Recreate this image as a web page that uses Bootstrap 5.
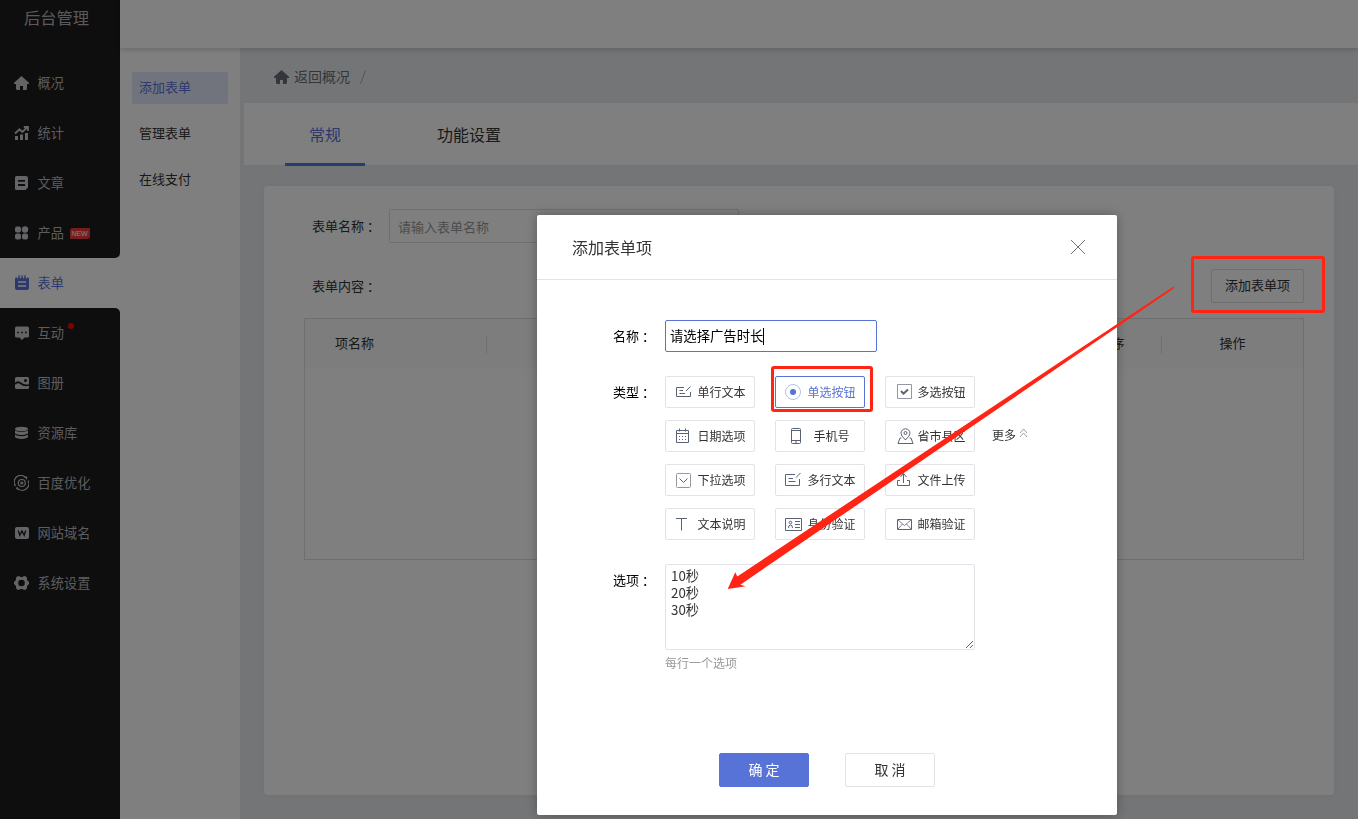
<!DOCTYPE html>
<html lang="zh-CN">
<head>
<meta charset="utf-8">
<meta name="viewport" content="width=device-width, initial-scale=1">
<title>后台管理</title>
<link href="https://cdn.jsdelivr.net/npm/bootstrap@5.3.0/dist/css/bootstrap.min.css" rel="stylesheet">
<style>
  body{font-family:"Noto Sans CJK SC",sans-serif;font-size:13px;line-height:20px;color:#333;background:#e9ebef;height:819px;overflow:hidden;position:relative;font-weight:400}
  svg{flex:none;display:block}
  .colon{padding-left:3px}
  .side{width:120px;background:#fff}
  .side-top{background:#1c1c1c;border-bottom-right-radius:5px;height:258px}
  .side-bottom{background:#1c1c1c;border-top-right-radius:5px}
  .brand-name{height:58px;padding:6px 0 0 24px;font-size:16.3px;line-height:22px;color:#b4b4b9}
  .side .nav-link{height:50px;padding:0 0 1px 14px;color:#b9b9be;gap:8.6px;font-size:13.2px;line-height:18px}
  .side .nav-link svg{margin-top:1px}
  .side .nav svg{color:#c8c8ce}
  .side .nav-link.active{color:#5873d8}
  .new-tag{width:20px;height:11px;background:#ef3b3b;color:#fff;border-radius:3px 1px 3px 1px;font:7px/11px "Liberation Sans",sans-serif;text-align:center;margin:1px 0 0 -3px}
  .dot{width:6px;height:6px;background:#f00;border-radius:50%;margin:-14px 0 0 -5px}
  .topbar{height:48px;background:#fff;box-shadow:0 1px 6px rgba(0,0,0,.22);z-index:1}
  .submenu{width:120px;background:#fff;padding:24px 12px;gap:14px}
  .submenu a{height:32px;padding:0 7px;line-height:30px;color:#333;text-decoration:none;border-radius:2px}
  .submenu a.active{background:#e3e8fb;color:#5873d8}
  .crumbs{height:55px;padding:2px 0 0 34px;font-size:14px;line-height:18px;gap:5px;color:#666f77}
  .crumbs>span{margin-top:-2px}
  .tabbar{height:62px;margin-left:4px;background:#fff;padding-left:41px}
  .tabbar a{width:80px;height:63px;line-height:62px;font-size:16px;color:#333;text-align:center;text-decoration:none;margin-right:64px;white-space:nowrap}
  .tabbar a.active{color:#5873d8;border-bottom:3px solid #5078dc}
  .panel{margin:21px 24px 0 24px;height:609px;background:#fff;border-radius:4px;padding:23px 30px 0 40px;box-shadow:0 0 8px rgba(0,0,0,.05)}
  .panel .flabel{width:85px;padding:0 0 1px 8px}
  .panel .form-control{width:350px;height:34px;font-size:13px;border:1px solid #dcdee3;border-radius:2px;padding:0 8px}
  .form-control::placeholder{color:#999;opacity:1}
  .add-btn{width:93px;height:34px;border:1px solid #dcdee3;border-radius:2px;font-size:13px;padding:0 0 2px;color:#333}
  .grid-table{border:1px solid #dcdee3;height:242px;margin-top:15px}
  .grid-head{height:50px;background:#fafafa;padding-top:1px}
  .grid-head>div{height:18px;line-height:14px;border-right:1px solid #dcdee3;padding-left:30px}
  .modal{background:rgba(0,0,0,.5);overflow:hidden}
  .modal-dialog{width:580px;max-width:none;margin:215px 0 0 537px}
  .modal-content{height:600px;border:0;border-radius:2px;box-shadow:0 0 12px rgba(0,0,0,.3)}
  .modal-header{height:65px;padding:0 32px 0 35px;border-bottom:1px solid #e2e3e5;border-radius:0}
  .modal-title{font-size:16px;line-height:24px;font-weight:400;color:#333}
  .modal-body{padding:40px 0 0 76px;color:#000}
  .lab{width:52px;line-height:31px;flex:none}
  .name-box{width:212px;height:32px;border:1px solid #5873d8;border-radius:2px;padding:0 4px;font-size:13.33px;color:#000}
  .caret{width:1px;height:17px;background:#000}
  .types{display:grid;grid-template-columns:repeat(3,90px);gap:12px 20px}
  .types .btn{height:32px;border:1px solid #e2e2e8;border-radius:2px;padding:0 0 0 8px;font-size:12px;gap:2.6px;color:#333;background:#fff}
  .types .btn span{width:50px;text-align:center;white-space:nowrap}
  .types .btn.active{border-color:#5873d8;color:#5873d8;background:#fff}
  .types svg{width:20px;height:20px;fill:none;stroke:#5a6373}
  textarea.form-control{width:310px;height:86px;min-height:0;border:1px solid #e2e2e8;border-radius:2px;padding:2px 5px;font-size:13.3px;line-height:17px;color:#333}
  .hint{font-size:12px;line-height:18px;color:#999;padding-top:4px}
  .acts{margin:81px 0 0 106px;gap:36px}
  .acts .btn{width:90px;height:34px;border-radius:2px;padding:0 0 1px;font-size:14px;border:1px solid #e2e2e8;color:#333}
  .acts .btn-primary{background:#5873d8;border-color:#5873d8;color:#fff}
  .notes{position:absolute;left:0;top:0;z-index:2000;pointer-events:none}
</style>
</head>
<body class="d-flex">
<aside class="side d-flex flex-column flex-shrink-0">
  <div class="side-top">
    <div class="brand-name">后台管理</div>
    <nav class="nav flex-column">
      <a class="nav-link d-flex align-items-center" href="#"><svg width="15" height="16" viewBox="0 0 15 16" fill="currentColor"><path d="M7.500 1 0 7.800V9h2v4.500Q2 15 3.500 15H6v-4h3v4h2.500q1.500 0 1.500-1.500V9h2V7.800z"/></svg>概况</a>
      <a class="nav-link d-flex align-items-center" href="#"><svg width="15" height="16" viewBox="0 0 15 16" fill="currentColor"><path d="M1 11h3v4H1zM6 9.500h3V15H6zM11 8h3v7h-3z"/><path d="M1 8.500 5.500 4.300 8.300 7 13 2.500M9.800 2H14v4" fill="none" stroke="currentColor" stroke-width="1.800"/></svg>统计</a>
      <a class="nav-link d-flex align-items-center" href="#"><svg width="15" height="16" viewBox="0 0 15 16"><path d="M2.500 1H12q2 0 2 2v9.500L11.500 15h-9Q1 15 1 13.500v-11Q1 1 2.500 1z" fill="currentColor"/><path d="M4 5.800h7M4 10h7" stroke="#1c1c1c" stroke-width="1.800"/></svg>文章</a>
      <a class="nav-link d-flex align-items-center" href="#"><svg width="15" height="16" viewBox="0 0 15 16" fill="currentColor"><rect x="1" y="1.500" width="6" height="6" rx="2"/><circle cx="11" cy="4.500" r="3.200"/><rect x="1" y="8.500" width="6" height="6" rx="2"/><rect x="8" y="8.500" width="6" height="6" rx="2"/></svg>产品<span class="new-tag">NEW</span></a>
    </nav>
  </div>
  <a class="nav-link active d-flex align-items-center flex-shrink-0" href="#"><svg width="15" height="16" viewBox="0 0 15 16"><path d="M1 3.500q0-1 1-1h12q1 0 1 1V13q0 2-2 2H3q-2 0-2-2z" fill="currentColor"/><path d="M5 .2v3M8 .2v3M11 .2v3" stroke="currentColor" stroke-width="1.300"/><path d="M3.300 2.700h.9M6.200 2.700h.7M9.200 2.700h.7M12 2.700h.9M4 7h8M4 11h8" stroke="#fff" stroke-width="1.600"/></svg>表单</a>
  <div class="side-bottom flex-grow-1">
    <nav class="nav flex-column">
      <a class="nav-link d-flex align-items-center" href="#"><svg width="15" height="16" viewBox="0 0 15 16"><path d="M2.500 1.500h11Q15 1.500 15 3v8q0 1.500-1.500 1.500h-3L8 15l-2.500-2.500h-3Q1 12.500 1 11V3q0-1.500 1.500-1.500z" fill="currentColor"/><path d="M3.300 7.500h1.700M7.200 7.500h1.700M11 7.500h1.700" stroke="#1c1c1c" stroke-width="1.600"/></svg>互动<span class="dot"></span></a>
      <a class="nav-link d-flex align-items-center" href="#"><svg width="15" height="16" viewBox="0 0 15 16"><rect x="1" y="2" width="14" height="12" rx="1.500" fill="currentColor"/><circle cx="11.500" cy="5.500" r="1.500" fill="#1c1c1c"/><path d="M1 9Q4 5.800 7 8.500t8 1.500" fill="none" stroke="#1c1c1c" stroke-width="1.700"/></svg>图册</a>
      <a class="nav-link d-flex align-items-center" href="#"><svg width="15" height="16" viewBox="0 0 15 16" fill="currentColor"><ellipse cx="7.500" cy="4" rx="6.500" ry="2.300"/><path d="M1 5.600q6.500 3 13 0v2.800q-6.500 3-13 0zM1 9.800q6.500 3 13 0v2.500q-2.500 1.800-6.500 1.800T1 12.300z"/></svg>资源库</a>
      <a class="nav-link d-flex align-items-center" href="#"><svg width="15" height="16" viewBox="0 0 15 16" fill="none" stroke="currentColor" stroke-width="1.200"><path d="M1.500 11A6.600 6.600 0 0 1 12 3M14 5.500A6.600 6.600 0 0 1 3.500 13.300"/><circle cx="7.800" cy="8" r="3.500"/><circle cx="7.800" cy="8" r="1"/><path d="m10.500 1.800 2.300.5-.6 2M5 14.500l-2.300-.8.6-1.700"/></svg>百度优化</a>
      <a class="nav-link d-flex align-items-center" href="#"><svg width="15" height="16" viewBox="0 0 15 16"><rect x="1" y="2" width="14" height="12" rx="2" fill="currentColor"/><path d="m4.300 5.500 1.500 4.700L8 6l2.200 4.200 1.500-4.700" fill="none" stroke="#1c1c1c" stroke-width="1.300"/></svg>网站域名</a>
      <a class="nav-link d-flex align-items-center" href="#"><svg width="15" height="16" viewBox="0 0 15 16"><path fill="currentColor" fill-rule="evenodd" d="M3 1.500 5 1l1.500 1h2L10 1l2 .5 1 1.500v2l2 2v2l-2 2v2l-1 1.500-2 .5-1.500-1h-2L5 15l-2-.5L2 13v-2L0 9V7l2-2V3zM7.500 4.700a3.300 3.300 0 1 0 0 6.600 3.300 3.300 0 0 0 0-6.600z"/></svg>系统设置</a>
    </nav>
  </div>
</aside>
<div class="d-flex flex-column flex-grow-1">
  <header class="topbar flex-shrink-0"></header>
  <div class="d-flex flex-grow-1">
    <nav class="submenu d-flex flex-column flex-shrink-0">
      <a class="active" href="#">添加表单</a><a href="#">管理表单</a><a href="#">在线支付</a>
    </nav>
    <main class="flex-grow-1">
      <div class="crumbs d-flex align-items-center"><svg width="15" height="16" viewBox="0 0 15 16" fill="currentColor"><path d="M7.500 1 0 7.800V9h2v4.500Q2 15 3.500 15H6v-4h3v4h2.500q1.500 0 1.500-1.500V9h2V7.800z"/></svg><span>返回概况</span><svg class="ms-1" width="8" height="14" viewBox="0 0 8 14"><path d="M1.500 13.500 6.500.5" stroke="#a5a8ad"/></svg></div>
      <div class="tabbar d-flex"><a class="active" href="#">常规</a><a href="#">功能设置</a></div>
      <section class="panel">
        <div class="d-flex align-items-center"><span class="flabel">表单名称<span class="colon">：</span></span><input class="form-control" placeholder="请输入表单名称"></div>
        <div class="d-flex align-items-center justify-content-between" style="margin-top:26px"><span class="flabel">表单内容<span class="colon">：</span></span><button class="btn add-btn">添加表单项</button></div>
        <div class="grid-table">
          <div class="grid-head d-flex align-items-center">
            <div style="width:182px">项名称</div>
            <div class="flex-grow-1"></div>
            <div class="text-center p-0" style="width:100px">排序</div>
            <div class="text-center p-0 border-0" style="width:141px">操作</div>
          </div>
        </div>
      </section>
    </main>
  </div>
</div>

<div class="modal d-block" tabindex="-1">
  <div class="modal-dialog">
    <div class="modal-content">
      <div class="modal-header d-flex align-items-center justify-content-between">
        <h5 class="modal-title">添加表单项</h5>
        <svg width="14" height="14" viewBox="0 0 14 14"><path d="m0 0 14 14M14 0 0 14" stroke="#666" stroke-width=".9"/></svg>
      </div>
      <div class="modal-body">
        <div class="d-flex"><span class="lab">名称<span class="colon">：</span></span><div class="name-box d-flex align-items-center">请选择广告时长<i class="caret"></i></div></div>
        <div class="d-flex mt-4"><span class="lab">类型<span class="colon">：</span></span>
          <div class="types">
            <button class="btn d-flex align-items-center"><svg viewBox="0 0 20 20"><path d="M10 5.500H2.500v9h14V10M5.500 8.500H9M5.500 11.500H11M12 9l4.500-4.500"/></svg><span>单行文本</span></button>
            <button class="btn active d-flex align-items-center"><svg viewBox="0 0 20 20"><circle cx="9" cy="10" r="7.500" stroke="#b4c0ec"/><circle cx="9" cy="10" r="3" fill="#5873d8" stroke="none"/></svg><span>单选按钮</span></button>
            <button class="btn d-flex align-items-center"><svg viewBox="0 0 20 20"><path d="M3.500 2.500h14v14h-14z" stroke="#9298a3"/><path d="m7 9 2.500 2.700L14 7.500" stroke-width="2"/></svg><span>多选按钮</span></button>
            <button class="btn d-flex align-items-center"><svg viewBox="0 0 20 20"><path d="M2.500 4.500h12v12h-12zM2.500 7.500h12M5.500 2.500v3M11.500 2.500v3"/><path d="M5 10.500h7M5 13.500h7" stroke-dasharray="1 2"/></svg><span>日期选项</span></button>
            <button class="btn d-flex align-items-center"><svg viewBox="0 0 20 20"><rect x="7.500" y="2.500" width="9" height="15" rx="1"/><path d="M7.500 4.500h9M7.500 14.500h9M11 16h2"/></svg><span>手机号</span></button>
            <button class="btn d-flex align-items-center"><svg viewBox="0 0 20 20"><path d="M11.500 14Q7 9.800 7 7.300a4.500 4.500 0 0 1 9 0Q16 9.800 11.500 14z"/><circle cx="11.500" cy="7" r="1.500"/><path d="M7.300 12H6l-2 5.500h15L17 12h-1.300"/></svg><span>省市县区</span></button>
            <button class="btn d-flex align-items-center"><svg viewBox="0 0 20 20"><rect x="2.500" y="3.500" width="14" height="14" rx="1" stroke="#9298a3"/><path d="m5.500 8.500 4 4 4-4"/></svg><span>下拉选项</span></button>
            <button class="btn d-flex align-items-center"><svg viewBox="0 0 20 20"><path d="M11 4.500H1.500v11h14V9M4.500 8.500H9M4.500 11.500h7M12 7.500 16.500 3"/></svg><span>多行文本</span></button>
            <button class="btn d-flex align-items-center"><svg viewBox="0 0 20 20"><path d="M6 10.500H3.500v5h12v-5H13M9.500 13V4M6.500 7l3-3.500 3 3.500"/></svg><span>文件上传</span></button>
            <button class="btn d-flex align-items-center"><svg viewBox="0 0 20 20"><path d="M2 4.500h11M7.500 4.500v12"/></svg><span>文本说明</span></button>
            <button class="btn d-flex align-items-center"><svg viewBox="0 0 20 20"><path d="M1.500 4.500h16v12h-16zM11 7.500h5M11 10.500h5M11 13.500h5M4.500 14q0-3 2-3t2 3"/><circle cx="6.500" cy="8.500" r="1.300"/></svg><span>身份验证</span></button>
            <button class="btn d-flex align-items-center"><svg viewBox="0 0 20 20"><path d="M3.500 5.500h14v10h-14z"/><path d="m4 6 6.500 5.500L17 6M4 15l4.500-5M17 15l-4.500-5" stroke-width=".8"/></svg><span>邮箱验证</span></button>
          </div>
          <div class="d-flex" style="font-size:12px;color:#333;padding:49px 0 0 17px">更多<svg style="margin:3px 0 0 3px" width="9" height="10" viewBox="0 0 9 10" fill="none" stroke="#888" stroke-width=".8"><path d="m1 5 3.500-4L8 5M1 9l3.500-4L8 9"/></svg></div>
        </div>
        <div class="d-flex mt-4"><span class="lab">选项<span class="colon">：</span></span>
          <div><textarea class="form-control" spellcheck="false">10秒
20秒
30秒</textarea><div class="hint">每行一个选项</div></div>
        </div>
        <div class="acts d-flex"><button class="btn btn-primary">确 定</button><button class="btn">取 消</button></div>
      </div>
    </div>
  </div>
</div>

<svg class="notes" width="1358" height="819" viewBox="0 0 1358 819">
  <g fill="none" stroke="#ff2414" stroke-width="3"><rect x="772.500" y="367.500" width="99" height="43" rx="1.500"/><rect x="1192.500" y="257.500" width="131" height="54" rx="1.500"/></g>
  <path d="M1173.500 286.500 737.300 576.500 735.300 572.300 727.700 589 745.700 586.300 740.300 584.700 1174 288.300z" fill="#ff2414"/>
</svg>
<script src="https://cdn.jsdelivr.net/npm/bootstrap@5.3.0/dist/js/bootstrap.bundle.min.js"></script>
</body>
</html>
